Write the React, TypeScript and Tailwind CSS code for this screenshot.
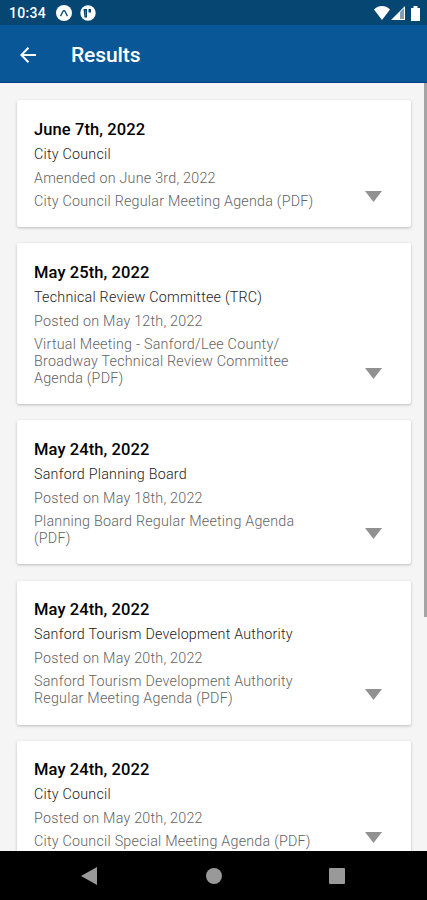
import React from 'react'

interface IMeeting {
  id: number
  date: string
  board: string
  status: string
  agenda: string
}

const meetings: IMeeting[] = [
  {
    id: 1,
    date: 'June 7th, 2022',
    board: 'City Council',
    status: 'Amended on June 3rd, 2022',
    agenda: 'City Council Regular Meeting Agenda (PDF)',
  },
  {
    id: 2,
    date: 'May 25th, 2022',
    board: 'Technical Review Committee (TRC)',
    status: 'Posted on May 12th, 2022',
    agenda:
      'Virtual Meeting - Sanford/Lee County/ Broadway Technical Review Committee Agenda (PDF)',
  },
  {
    id: 3,
    date: 'May 24th, 2022',
    board: 'Sanford Planning Board',
    status: 'Posted on May 18th, 2022',
    agenda: 'Planning Board Regular Meeting Agenda (PDF)',
  },
  {
    id: 4,
    date: 'May 24th, 2022',
    board: 'Sanford Tourism Development Authority',
    status: 'Posted on May 20th, 2022',
    agenda: 'Sanford Tourism Development Authority Regular Meeting Agenda (PDF)',
  },
  {
    id: 5,
    date: 'May 24th, 2022',
    board: 'City Council',
    status: 'Posted on May 20th, 2022',
    agenda: 'City Council Special Meeting Agenda (PDF)',
  },
]

function StatusBar() {
  return (
    <div className="flex h-[25px] shrink-0 items-center justify-between bg-[#064673] pl-[9px] pr-[7px] pt-[1px] text-white">
      <div className="flex items-center">
        <span className="w-[47px] text-[14px] font-medium leading-4 tracking-[0.3px]">10:34</span>
        <svg className="h-4 w-4" viewBox="0 0 16 16">
          <circle cx="8" cy="8" r="8" fill="white" />
          <path
            d="M4.500 11C5.800 9.500 6.800 5.500 8 5.500s2.200 4 3.500 5.500"
            fill="none"
            stroke="#064673"
            strokeWidth="1.4"
          />
        </svg>
        <svg className="ml-2 h-4 w-4" viewBox="0 0 16 16">
          <circle cx="8" cy="8" r="7.7" fill="white" />
          <path d="M3.500 4h3.500v8.500H4.500zM8.500 4H11v3.500H8.500z" fill="#064673" />
          <path d="M5 5.500h.8V11H5z" fill="white" opacity="0.3" />
        </svg>
      </div>
      <div className="flex items-center">
        <svg className="h-[14px] w-4" viewBox="0 0 16 14">
          <path d="M0 3.600C2.300 1.100 5 0 8 0s5.700 1.100 8 3.600L8 14z" fill="white" />
        </svg>
        <svg className="ml-[1px] h-[14px] w-[14px]" viewBox="0 0 14 14">
          <path d="M14 0v14H0z" fill="white" />
          <path d="M9 6 13 2v11H9z" fill="#7f9db5" />
        </svg>
        <svg className="ml-[6px] h-[15px] w-[9px]" viewBox="0 0 9 15">
          <path d="M2.500 0h4v2H9v13H0V2h2.500z" fill="white" />
        </svg>
      </div>
    </div>
  )
}

function Header() {
  return (
    <header className="flex h-[58px] shrink-0 items-center border-b border-[#063f85] bg-[#095797] pl-5 pt-[2px] text-white">
      <svg className="h-4 w-4" viewBox="0 0 16 16" fill="none" stroke="white" strokeWidth="2">
        <path d="M16 8H1.500M8.500 .8 1.300 8l7.200 7.200" />
      </svg>
      <h1 className="ml-[35px] text-[21px] font-medium leading-6 tracking-[-0.1px]">Results</h1>
    </header>
  )
}

function MeetingCard({ item }: { item: IMeeting }) {
  return (
    <div className="flex items-end justify-between rounded-[2px] bg-white pb-[17.500px] pl-[17px] pr-[29px] pt-[18.500px] shadow-[0_1px_3px_rgba(0,0,0,0.24)]">
      <div className="w-[290px] text-[14.3px] font-light leading-[17px] tracking-[0.23px] text-[#636363]">
        <h2 className="text-[16.5px] font-medium leading-[21px] tracking-[0.1px] text-black">{item.date}</h2>
        <p className="mt-[6px] text-[#222222]">{item.board}</p>
        <p className="mt-[7px]">{item.status}</p>
        <p className="mt-[6px]">{item.agenda}</p>
      </div>
      <svg className="mb-[7.500px] h-[11px] w-[17px]" viewBox="0 0 17 11">
        <path d="M0 0h17L8.500 11z" fill="#919191" />
      </svg>
    </div>
  )
}

function NavigationBar() {
  return (
    <nav className="flex h-[49px] shrink-0 items-center justify-between bg-black pl-[81px] pr-[82px]">
      <svg className="h-[18px] w-4" viewBox="0 0 16 18">
        <path d="M16 0v18L0 9z" fill="#999999" />
      </svg>
      <div className="ml-[1px] h-4 w-4 rounded-full bg-[#999999]" />
      <div className="h-4 w-4 rounded-[1px] bg-[#999999]" />
    </nav>
  )
}

function App() {
  return (
    <div className="flex h-[900px] w-[427px] flex-col overflow-hidden bg-[#f5f5f5] font-[Roboto,sans-serif]">
      <StatusBar />
      <Header />
      <main className="flex min-h-0 flex-1 justify-between overflow-hidden">
        <div className="ml-[17px] mt-[17px] flex w-[394px] flex-col gap-[16.200px]">
          {meetings.map((item) => (
            <MeetingCard key={item.id} item={item} />
          ))}
        </div>
        <div className="h-[534px] w-[3px] bg-[#a5a5a5]" />
      </main>
      <NavigationBar />
    </div>
  )
}

export default App
